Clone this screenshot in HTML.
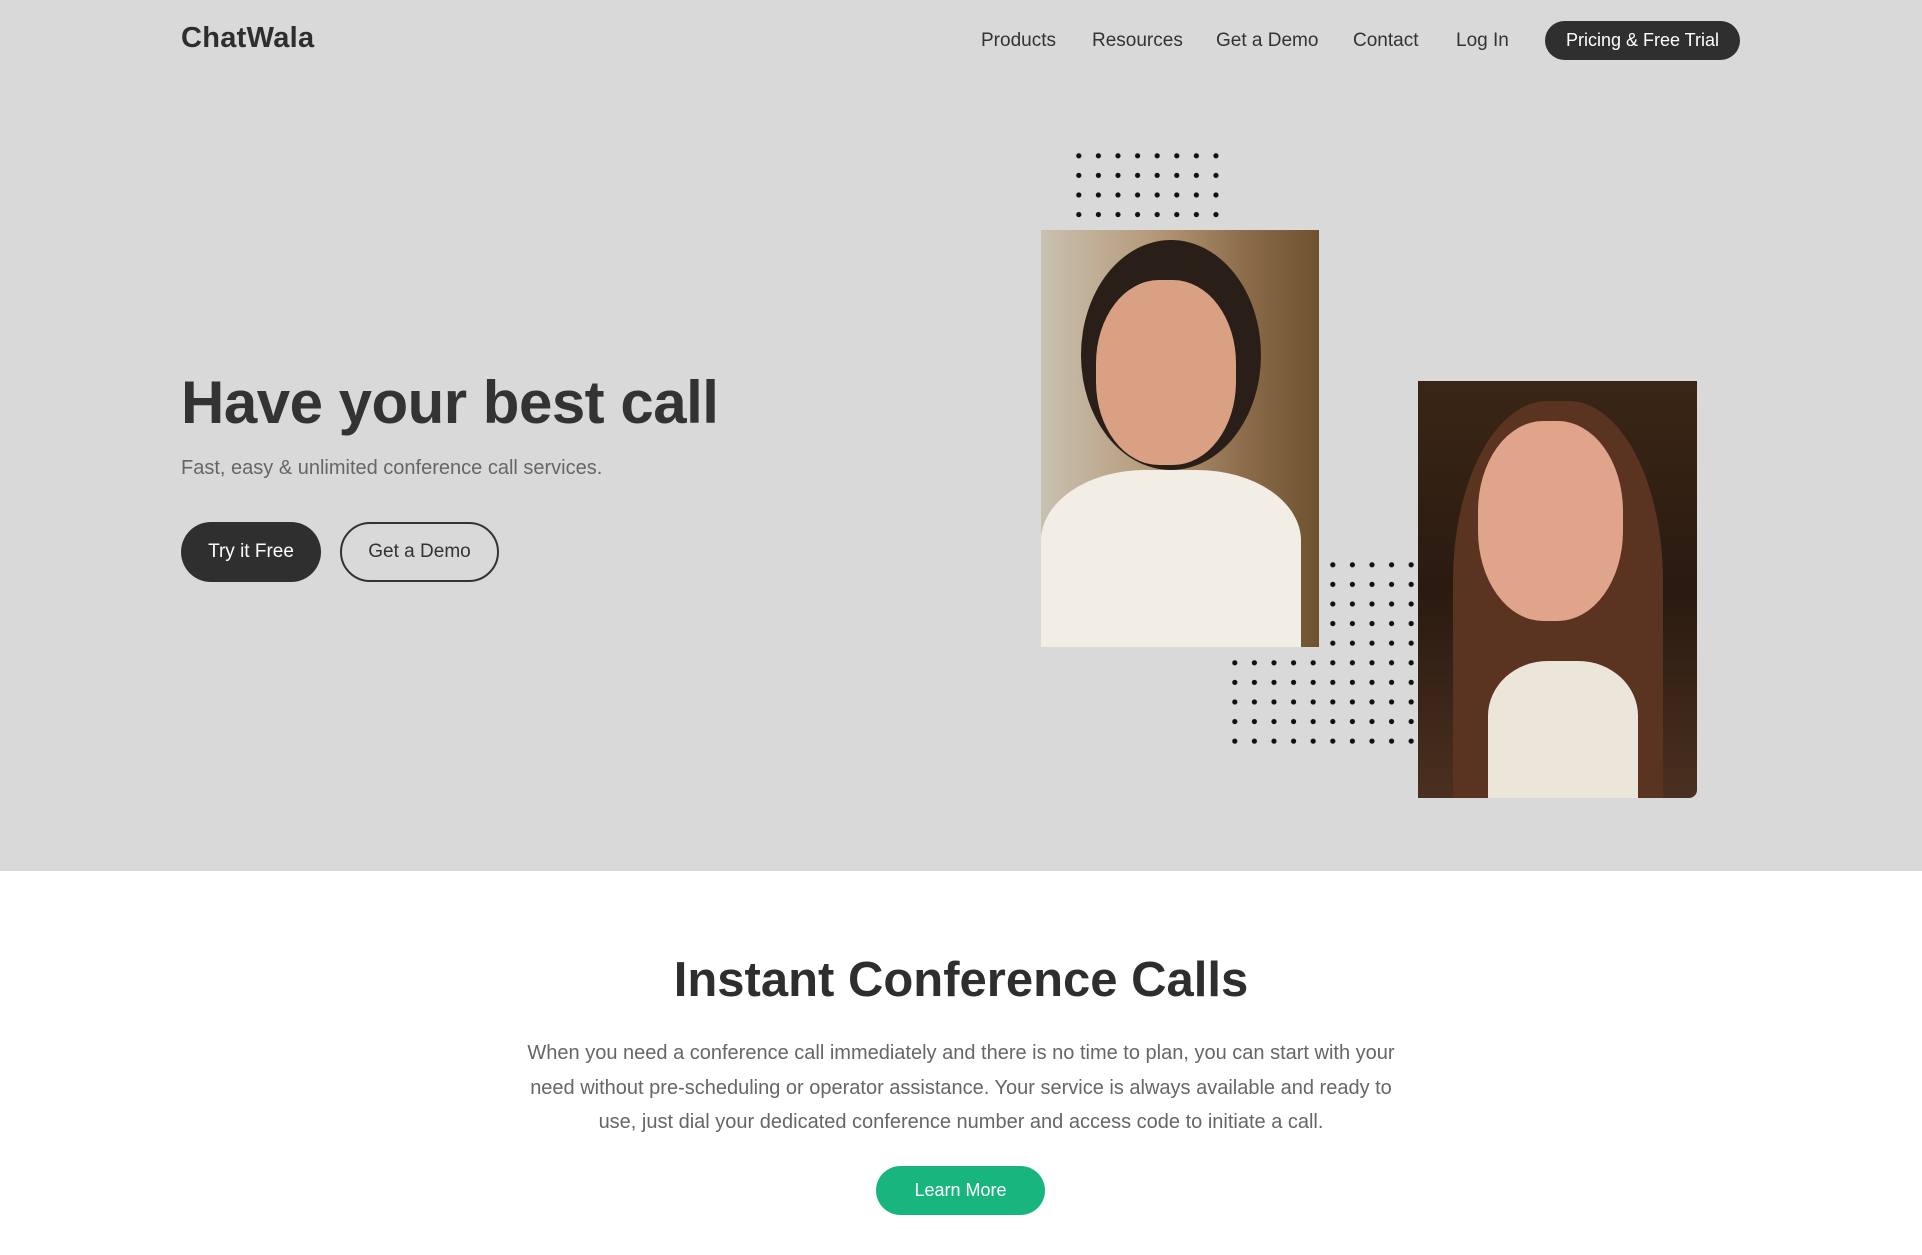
<!DOCTYPE html>
<html><head><meta charset="utf-8"><style>
*{margin:0;padding:0;box-sizing:border-box}
body{width:1922px;height:1255px;overflow:hidden;background:#fff;font-family:"Liberation Sans",sans-serif;color:#333;position:relative}
.hero{position:absolute;left:0;top:0;width:1922px;height:871px;background:#d9d9d9}
.logo{position:absolute;left:181px;top:22px;font-size:29px;font-weight:bold;color:#2e2e2e;letter-spacing:0.3px}
.nav a{position:absolute;top:30px;font-size:19px;color:#333;text-decoration:none}
.pbtn{position:absolute;left:1545px;top:21px;width:195px;height:39px;border-radius:20px;background:#2f2f2f;color:#fff;font-size:18px;line-height:39px;text-align:center}
h1{position:absolute;left:181px;top:368px;font-size:60px;font-weight:bold;color:#333;letter-spacing:-0.5px}
.sub{position:absolute;left:181px;top:457px;font-size:20px;color:#666}
.b1{position:absolute;left:181px;top:522px;width:140px;height:60px;border-radius:30px;background:#2f2f2f;color:#fff;font-size:19px;line-height:60px;text-align:center}
.b2{position:absolute;left:340px;top:522px;width:159px;height:60px;border-radius:30px;border:2px solid #333;color:#333;font-size:19px;line-height:56px;text-align:center}
.ph{position:absolute;overflow:hidden}
.dots{position:absolute;background-image:radial-gradient(circle,#111 2.4px,transparent 2.8px);background-size:19.6px 19.6px}
h2{position:absolute;left:0;width:1922px;text-align:center;top:952px;font-size:49px;font-weight:bold;color:#2e2e2e}
.p{position:absolute;left:461px;width:1000px;top:1036px;text-align:center;font-size:20px;line-height:34.5px;color:#666}
.lm{position:absolute;left:876px;top:1166px;width:169px;height:49px;border-radius:25px;background:#19b57e;color:#fff;font-size:18px;line-height:49px;text-align:center}
</style></head><body>
<div class="hero"></div>
<div class="logo">ChatWala</div>
<div class="nav">
<a style="left:981px">Products</a><a style="left:1092px">Resources</a><a style="left:1216px">Get a Demo</a><a style="left:1353px">Contact</a><a style="left:1456px">Log In</a>
</div>
<div class="pbtn">Pricing &amp; Free Trial</div>
<h1>Have your best call</h1>
<div class="sub">Fast, easy &amp; unlimited conference call services.</div>
<div class="b1">Try it Free</div>
<div class="b2">Get a Demo</div>

<div class="dots" style="left:1069px;top:146px;width:157px;height:78px"></div>
<div class="dots" style="left:1323px;top:555px;width:98px;height:196px"></div>
<div class="dots" style="left:1225px;top:653px;width:98px;height:98px"></div>

<div class="ph" style="left:1041px;top:230px;width:278px;height:417px;background:linear-gradient(90deg,#c9c1b0 0%,#b59a7a 40%,#8a6a48 75%,#6e5230 100%)">
<div style="position:absolute;left:40px;top:10px;width:180px;height:230px;border-radius:50%;background:#2a1f18"></div>
<div style="position:absolute;left:55px;top:50px;width:140px;height:185px;border-radius:45%;background:#d9a083"></div>
<div style="position:absolute;left:0;top:240px;width:260px;height:177px;border-radius:40% 40% 0 0;background:#f2eee6"></div>
</div>
<div class="ph" style="left:1418px;top:381px;width:279px;height:417px;border-radius:0 0 8px 0;background:linear-gradient(180deg,#3a2616 0%,#2a1a10 50%,#4a3020 100%)">
<div style="position:absolute;left:35px;top:20px;width:210px;height:400px;border-radius:45% 45% 0 0;background:#5a3420"></div>
<div style="position:absolute;left:60px;top:40px;width:145px;height:200px;border-radius:45%;background:#e0a48a"></div>
<div style="position:absolute;left:70px;top:280px;width:150px;height:137px;border-radius:40% 40% 0 0;background:#ece6da"></div>
</div>

<h2>Instant Conference Calls</h2>
<div class="p">When you need a conference call immediately and there is no time to plan, you can start with your<br>need without pre-scheduling or operator assistance. Your service is always available and ready to<br>use, just dial your dedicated conference number and access code to initiate a call.</div>
<div class="lm">Learn More</div>
</body></html>
